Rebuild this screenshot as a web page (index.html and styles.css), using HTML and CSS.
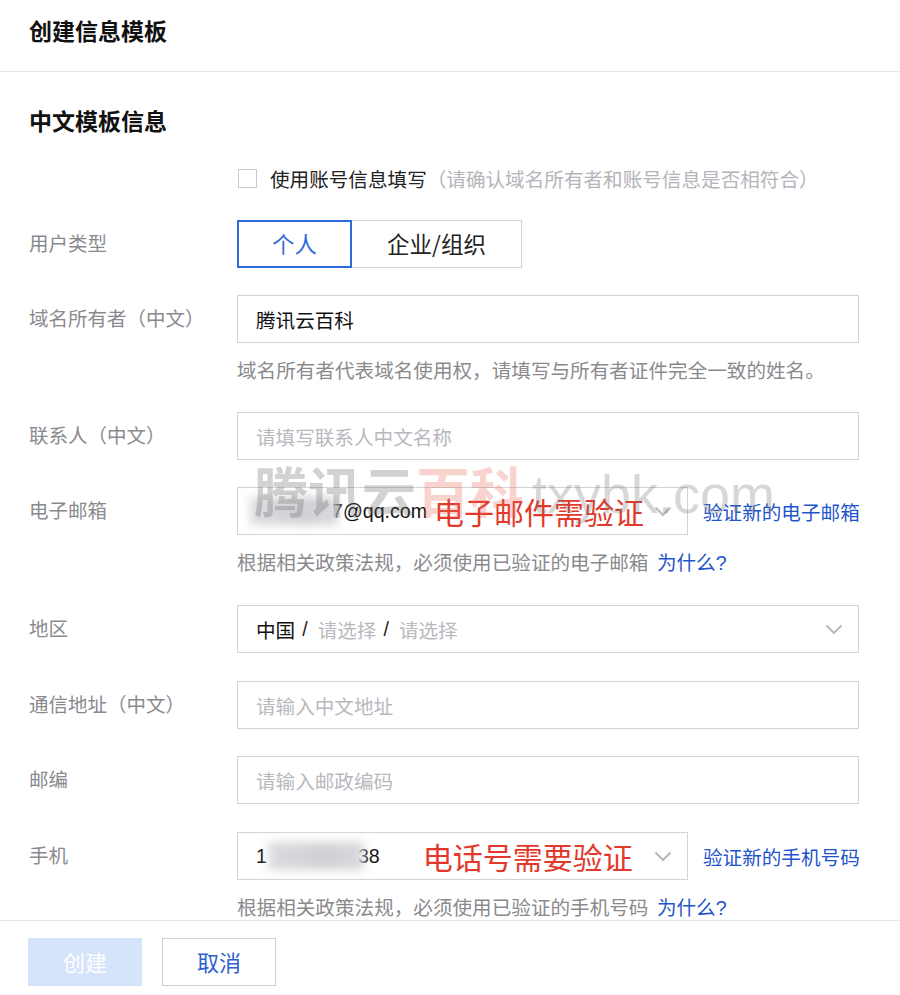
FILE: index.html
```html
<!DOCTYPE html>
<html lang="zh-CN">
<head>
<meta charset="utf-8">
<title>创建信息模板</title>
<link rel="stylesheet" href="styles.css">
</head>
<body>
<div class="page">
  <header class="header"><h1 class="title">创建信息模板</h1></header>
  <main class="content">
    <h2 class="section-title">中文模板信息</h2>
    <div class="form">
      <div class="row row-check">
        <div class="label label-short"></div>
        <div class="control">
          <label class="check"><span class="box"></span><span class="check-text">使用账号信息填写</span><span class="check-hint">（请确认域名所有者和账号信息是否相符合）</span></label>
        </div>
      </div>

      <div class="row">
        <div class="label">用户类型</div>
        <div class="control">
          <div class="segmented">
            <span class="seg seg-active">个人</span>
            <span class="seg seg-wide">企业/组织</span>
          </div>
        </div>
      </div>

      <div class="row">
        <div class="label">域名所有者（中文）</div>
        <div class="control">
          <div class="input"><span class="value">腾讯云百科</span></div>
          <div class="help">域名所有者代表域名使用权，请填写与所有者证件完全一致的姓名。</div>
        </div>
      </div>

      <div class="row">
        <div class="label">联系人（中文）</div>
        <div class="control">
          <div class="input"><span class="placeholder">请填写联系人中文名称</span></div>
        </div>
      </div>

      <div class="row row-tall">
        <div class="label">电子邮箱</div>
        <div class="control">
          <div class="inline">
            <div class="input select select-half">
              <span class="blur blur-email"></span><span class="value">7@qq.com</span><span class="note">电子邮件需验证</span>
              <svg class="chevron" width="18" height="11" viewBox="0 0 18 11"><polyline points="1.5,1.5 9,9 16.5,1.5" fill="none" stroke="#b9bac2" stroke-width="2.2"/></svg>
            </div>
            <a class="link">验证新的电子邮箱</a>
          </div>
          <div class="help help-loose">根据相关政策法规，必须使用已验证的电子邮箱 <a class="link">为什么?</a></div>
        </div>
      </div>

      <div class="row row-tall">
        <div class="label">地区</div>
        <div class="control">
          <div class="input select">
            <span class="value">中国</span><span class="sep">/</span><span class="placeholder">请选择</span><span class="sep">/</span><span class="placeholder">请选择</span>
            <svg class="chevron" width="18" height="11" viewBox="0 0 18 11"><polyline points="1.5,1.5 9,9 16.5,1.5" fill="none" stroke="#b9bac2" stroke-width="2.2"/></svg>
          </div>
        </div>
      </div>

      <div class="row">
        <div class="label">通信地址（中文）</div>
        <div class="control">
          <div class="input"><span class="placeholder">请输入中文地址</span></div>
        </div>
      </div>

      <div class="row row-tall">
        <div class="label">邮编</div>
        <div class="control">
          <div class="input"><span class="placeholder">请输入邮政编码</span></div>
        </div>
      </div>

      <div class="row row-last">
        <div class="label">手机</div>
        <div class="control">
          <div class="inline">
            <div class="input select select-half">
              <span class="value">1</span><span class="blur blur-phone"></span><span class="value">38</span><span class="note note-phone">电话号需要验证</span>
              <svg class="chevron" width="18" height="11" viewBox="0 0 18 11"><polyline points="1.5,1.5 9,9 16.5,1.5" fill="none" stroke="#b9bac2" stroke-width="2.2"/></svg>
            </div>
            <a class="link">验证新的手机号码</a>
          </div>
          <div class="help">根据相关政策法规，必须使用已验证的手机号码 <a class="link">为什么?</a></div>
        </div>
      </div>
    </div>
  </main>

  <div class="watermark"><span class="wm-gray">腾讯云</span><span class="wm-red">百科</span><span class="wm-url">txybk.com</span></div>

  <footer class="footer">
    <button class="btn btn-primary" disabled>创建</button>
    <button class="btn btn-default">取消</button>
  </footer>
</div>
</body>
</html>
```

FILE: styles.css
```css
* { box-sizing: border-box; }

html, body {
  margin: 0;
  background: #ffffff;
}

body {
  font-family: "Liberation Sans", "Noto Sans CJK SC", sans-serif;
  color: #111;
  font-size: 19.6px;
}

.page {
  position: relative;
  min-height: 995px;
}

.header {
  height: 72px;
  border-bottom: 1px solid #e6e6e8;
  padding: 15px 0 0 29px;
}

.title {
  margin: 0;
  font-size: 23px;
  line-height: 30px;
  font-weight: bold;
  color: #111;
  font-family: "Noto Sans CJK SC", sans-serif;
}

.content {
  padding: 33px 41px 0 29px;
}

.section-title {
  margin: 0 0 30px;
  font-size: 23px;
  line-height: 30px;
  font-weight: bold;
  color: #111;
  font-family: "Noto Sans CJK SC", sans-serif;
}

.row {
  display: flex;
  align-items: flex-start;
  margin-bottom: 27px;
}

.row-check { margin-bottom: 29px; }

.row-tall { margin-bottom: 28px; }

.row-last { margin-bottom: 0; }

.label {
  width: 208px;
  flex: none;
  line-height: 48px;
  color: #8a8a8e;
  font-size: 19.5px;
  white-space: nowrap;
}

.label-short { line-height: 26px; }

.control {
  flex: 1;
  min-width: 0;
}

.check {
  display: flex;
  align-items: center;
  height: 26px;
}

.box {
  width: 19px;
  height: 19px;
  border: 1px solid #c9c9cf;
  background: #fff;
  margin: 0 13px 0 1px;
  flex: none;
}

.check-text { color: #222; }

.check-hint { color: #b4b4ba; }

.segmented {
  display: flex;
  height: 48px;
}

.seg {
  width: 115px;
  height: 48px;
  display: flex;
  align-items: center;
  justify-content: center;
  border: 1px solid #d2d2d8;
  font-size: 22.5px;
  color: #222;
  padding-bottom: 3px;
  font-family: "Noto Sans CJK SC", sans-serif;
}

.seg-wide {
  width: 170px;
  border-left: none;
}

.seg-active {
  border: 2px solid #2f6ad8;
  color: #2f6ad8;
}

.input {
  height: 48px;
  border: 1px solid #d3d3d9;
  padding: 0 15px 0 18px;
  display: flex;
  align-items: center;
  background: #fff;
  font-size: 19.6px;
  white-space: nowrap;
}

.value { color: #111; }

.placeholder { color: #b8b8be; }

.sep {
  color: #222;
  margin: 0 10px 0 7px;
}

.chevron {
  margin-left: auto;
  flex: none;
}

.inline {
  display: flex;
  align-items: center;
  gap: 15px;
}

.select-half {
  width: 451px;
  flex: none;
}

.link {
  color: #1f55cc;
  text-decoration: none;
  font-size: 19.6px;
  white-space: nowrap;
}

.help {
  margin-top: 14px;
  line-height: 28px;
  color: #8a8a8e;
  font-size: 19.6px;
  white-space: nowrap;
}

.help-loose { margin-top: 14px; }

.help .link { margin-left: 3px; }

.blur {
  display: inline-block;
  height: 28px;
  background: linear-gradient(90deg, #dcdce0, #d0d0d4 60%, #dadade);
  filter: blur(5px);
  z-index: 1;
  flex: none;
}

.blur-email {
  width: 88px;
  margin: 0 -6px 0 -6px;
}

.blur-phone {
  width: 96px;
  margin: 0 -6px 0 1px;
}

.note {
  color: #e3392c;
  font-family: "Noto Sans CJK SC", sans-serif;
  font-size: 30px;
  line-height: 40px;
  margin-left: 7px;
}

.note-phone { margin-left: 43px; }

.watermark {
  position: absolute;
  left: 254px;
  top: 455px;
  font-size: 54px;
  line-height: 70px;
  pointer-events: none;
  white-space: nowrap;
  z-index: 5;
}

.wm-gray {
  font-family: "Noto Sans CJK SC", sans-serif;
  font-weight: bold;
  color: rgba(105, 105, 105, 0.3);
}

.wm-red {
  font-family: "Noto Sans CJK SC", sans-serif;
  font-weight: bold;
  color: rgba(235, 110, 90, 0.3);
}

.wm-url {
  font-family: "Liberation Sans", sans-serif;
  color: rgba(110, 110, 110, 0.28);
  margin-left: 8px;
}

.footer {
  position: fixed;
  left: 0;
  right: 0;
  bottom: 0;
  height: 75px;
  background: #fff;
  border-top: 1px solid #e6e6e8;
  padding: 17px 0 0 28px;
  display: flex;
  gap: 20px;
  align-items: flex-start;
  z-index: 10;
}

.btn {
  width: 114px;
  height: 48px;
  font-family: "Noto Sans CJK SC", sans-serif;
  font-size: 22px;
  border: 1px solid #cfcfd5;
  background: #fff;
  padding: 0 0 2px;
}

.btn-primary {
  background: #d5e3fb;
  border-color: #d5e3fb;
  color: #fff;
}

.btn-default {
  color: #2f5fd0;
}
```
